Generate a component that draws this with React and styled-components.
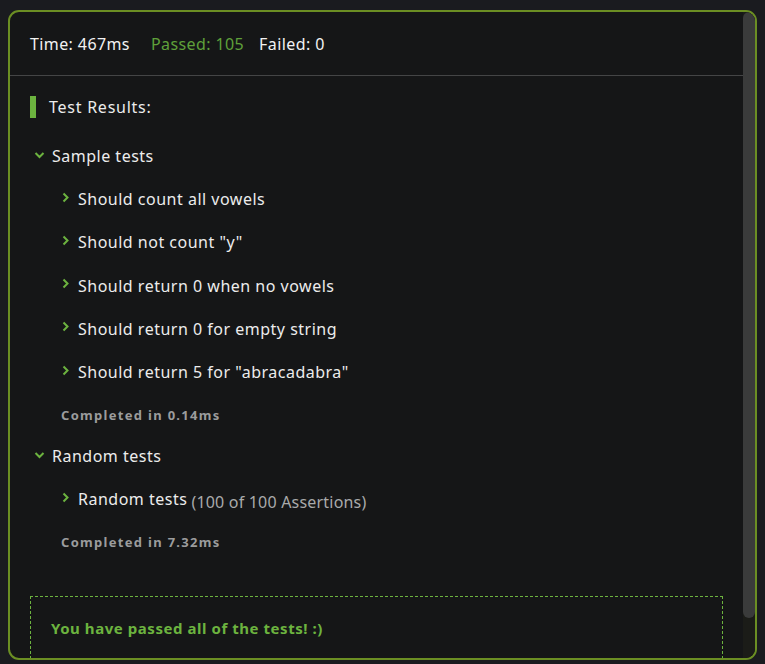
import React from 'react';
import styled, { createGlobalStyle } from 'styled-components';

const GlobalStyle = createGlobalStyle`
  html, body {
    margin: 0;
    background: #1a1b1f;
  }
  body {
    padding: 10px 8px 0 8px;
    font-family: "Noto Sans", "Open Sans", sans-serif;
    color: #ececec;
    overflow: hidden;
  }
`

const Card = styled.div`
  position: relative;
  box-sizing: border-box;
  height: 650px;
  border: 2px solid #6b8e23;
  border-radius: 11px;
  background: #151617;
  overflow: hidden;
`

const Content = styled.div`
  margin-right: 12px;
`

// headless shots hide native scrollbars, so the bar is drawn over the card
const ScrollTrack = styled.div`
  position: absolute;
  top: 0;
  right: 0;
  bottom: 0;
  width: 12px;
  background: #1b1c18;
`

const ScrollThumb = styled.div`
  height: 606px;
  border-radius: 6px;
  background: #3a3b3b;
`

const Header = styled.div`
  display: flex;
  align-items: center;
  height: 63px;
  padding: 0 20px;
  border-bottom: 1px solid #444546;
  font-size: 16px;
  letter-spacing: 0.4px;
`

const Stat = styled.span`
  color: ${p => (p.$pass ? '#5fa03a' : '#f2f2f2')};
  margin-right: ${p => p.$gap || 0}px;
`

const Body = styled.div`
  padding: 20px;
`

const Title = styled.div`
  display: flex;
  align-items: center;
  gap: 13px;
  height: 22px;
  font-size: 16px;
  letter-spacing: 0.75px;
  &::before {
    content: '';
    width: 6px;
    height: 22px;
    background: #6cb33f;
  }
`

const Group = styled.div`
  margin-top: ${p => p.$first ? '26px' : '20px'};
`

const Row = styled.div`
  display: flex;
  align-items: center;
  gap: 7px;
  height: 24px;
  padding-left: ${p => p.$depth ? '30px' : '4px'};
  margin-bottom: ${p => p.$depth ? '19.3px' : '19px'};
  font-size: 16px;
  letter-spacing: 0.5px;
`

const Arrow = styled.svg`
  width: 11px;
  height: 11px;
  flex-shrink: 0;
  margin-top: -4px;
`

const Note = styled.span`
  color: #a9aaab;
  font-size: 16px;
  letter-spacing: 0.2px;
  margin-left: -3px;
  margin-top: 6px;
`

const Completed = styled.div`
  padding-left: 31px;
  font-size: 13px;
  font-weight: 700;
  color: #9b9c9d;
  letter-spacing: 1.3px;
  margin-top: 22px;
`

const Success = styled.div`
  margin-top: 45px;
  border: 1px dashed #6cb33f;
  padding: 21px 20px 40px 20px;
  color: #6cb33f;
  font-weight: 700;
  font-size: 15px;
  letter-spacing: 0.55px;
`

const Chevron = ({ open }) => (
  <Arrow viewBox="0 0 11 11">
    <path
      d={open ? 'M1.5 4 L5.5 8 L9.5 4' : 'M3.5 1.5 L7.5 5.5 L3.5 9.5'}
      fill="none"
      stroke="#6cb33f"
      strokeWidth="2"
    />
  </Arrow>
)

const groups = [
  {
    name: 'Sample tests',
    time: '0.14ms',
    items: [
      { label: 'Should count all vowels' },
      { label: 'Should not count "y"' },
      { label: 'Should return 0 when no vowels' },
      { label: 'Should return 0 for empty string' },
      { label: 'Should return 5 for "abracadabra"' },
    ],
  },
  {
    name: 'Random tests',
    time: '7.32ms',
    items: [{ label: 'Random tests', note: '(100 of 100 Assertions)' }],
  },
]

export default function App() {
  return (
    <>
      <GlobalStyle />
      <Card>
        <Content>
          <Header>
            <Stat $gap={21}>Time: 467ms</Stat>
            <Stat $pass $gap={15}>Passed: 105</Stat>
            <Stat>Failed: 0</Stat>
          </Header>
          <Body>
            <Title>Test Results:</Title>
            {groups.map((g, i) => (
              <Group key={g.name} $first={i === 0}>
                <Row>
                  <Chevron open />
                  {g.name}
                </Row>
                {g.items.map(item => (
                  <Row $depth key={item.label}>
                    <Chevron />
                    {item.label}
                    {item.note && <Note>{item.note}</Note>}
                  </Row>
                ))}
                <Completed>Completed in {g.time}</Completed>
              </Group>
            ))}
            <Success>You have passed all of the tests! :)</Success>
          </Body>
        </Content>
        <ScrollTrack>
          <ScrollThumb />
        </ScrollTrack>
      </Card>
    </>
  );
}
